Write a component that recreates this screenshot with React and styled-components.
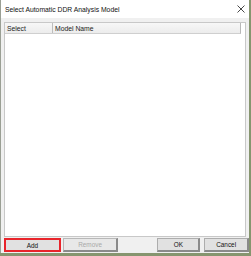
import React from 'react';
import styled, { createGlobalStyle } from 'styled-components';

const Global = createGlobalStyle`
  html, body { margin: 0; padding: 0; }
  body {
    background: #86956f;
    width: 251px;
    height: 256px;
    overflow: hidden;
    font-family: "Liberation Sans", Arial, sans-serif;
  }
`;

const Window = styled.div`
  width: 249px;
  height: 253px;
  box-sizing: border-box;
  background: #f0f0f0;
  border-left: 1px solid #9a9f94;
  display: flex;
  flex-direction: column;
`;

const TitleBar = styled.div`
  height: 18px;
  flex: none;
  background: #ffffff;
  display: flex;
  align-items: center;
  justify-content: space-between;
  padding: 0 4px 0 4px;
  font-size: 6.8px;
  color: #111;
`;

const Close = styled.svg`
  width: 8px;
  height: 8px;
  margin-right: 0;
`;

const Body = styled.div`
  flex: 1;
  display: flex;
  flex-direction: column;
  padding: 4px 0 1px 3px;
  gap: 1px;
`;

const List = styled.div`
  flex: 1;
  margin-right: 3px;
  background: #fff;
  border: 1px solid #c8c8c8;
  display: flex;
  flex-direction: column;
`;

const HeaderRow = styled.div`
  display: flex;
  height: 10px;
  margin-right: 4px;
  background: linear-gradient(#f7f7f7, #ececec);
  border-bottom: 1px solid #cfcfcf;
  border-right: 1px solid #b8b8b8;
  font-size: 6.8px;
  color: #222;
`;

const HeaderCell = styled.div`
  width: ${p => p.w || 'auto'};
  flex: ${p => (p.w ? 'none' : 1)};
  box-sizing: border-box;
  padding-left: 2px;
  display: flex;
  align-items: center;
  border-right: ${p => (p.divider ? '1px solid #bdbdbd' : 'none')};
`;

const ButtonRow = styled.div`
  height: 14px;
  display: flex;
  gap: 2px;
`;

const Button = styled.button`
  width: ${p => p.w}px;
  height: 14px;
  box-sizing: border-box;
  margin: 0;
  margin-left: ${p => p.ml || 0}px;
  padding: 0;
  font-family: "Liberation Sans", Arial, sans-serif;
  font-size: 6.4px;
  color: ${p => (p.disabled ? '#a8a8a8' : '#111')};
  background: ${p => (p.disabled ? '#e8e8e8' : '#e1e1e1')};
  border: 1px solid ${p => (p.focused ? '#e8242b' : p.disabled ? '#b8b8b8' : '#adadad')};
  border-right: ${p => (p.focused ? '1px solid #e8242b' : '2px solid #8a8a8a')};
  border-bottom: ${p => (p.focused ? '1px solid #e8242b' : '2px solid #8a8a8a')};
  outline: ${p => (p.focused ? '1px solid #e8242b' : 'none')};
  outline-offset: -2px;
`;

export default function App() {
  return (
    <>
      <Global />
      <Window>
        <TitleBar>
          <span>Select Automatic DDR Analysis Model</span>
          <Close viewBox="0 0 8 8">
            <path d="M0.5 0.5 L7.5 7.5 M7.5 0.5 L0.5 7.5" stroke="#333" strokeWidth="0.9" />
          </Close>
        </TitleBar>
        <Body>
          <List>
            <HeaderRow>
              <HeaderCell w="48px" divider>Select</HeaderCell>
              <HeaderCell>Model Name</HeaderCell>
            </HeaderRow>
          </List>
          <ButtonRow>
            <Button w={57} focused>Add</Button>
            <Button w={56} disabled>Remove</Button>
            <Button w={43} ml={37}>OK</Button>
            <Button w={45} ml={2}>Cancel</Button>
          </ButtonRow>
        </Body>
      </Window>
    </>
  );
}
